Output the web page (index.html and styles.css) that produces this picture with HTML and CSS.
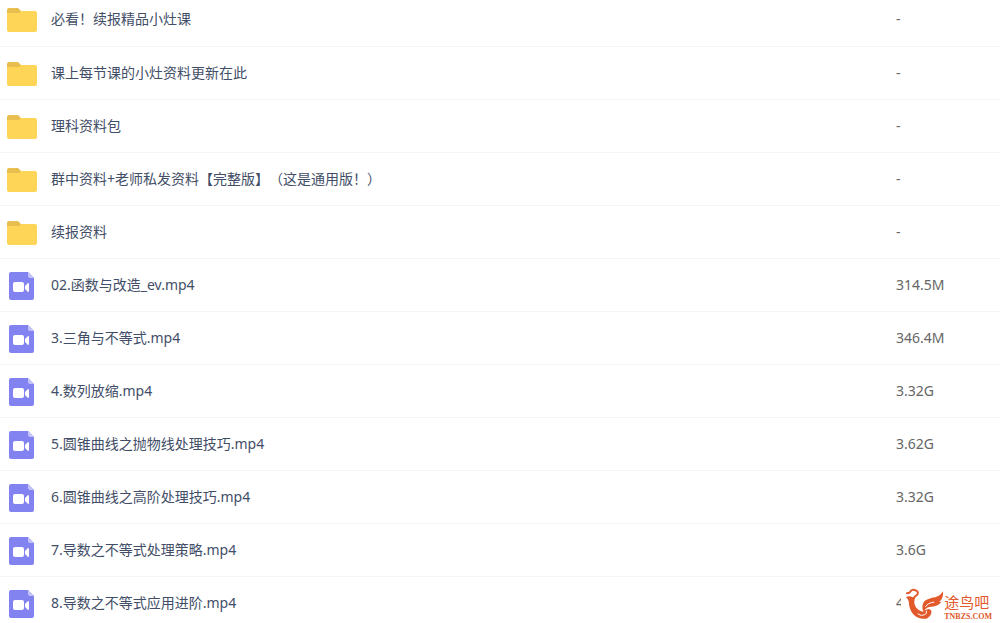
FILE: index.html
```
<!DOCTYPE html>
<html lang="zh-CN">
<head>
  <meta charset="UTF-8" />
  <title>文件列表</title>
  <link rel="stylesheet" href="styles.css">
</head>
<body>
  <!-- Shared icons -->
  <svg class="sprite" aria-hidden="true">
    <symbol id="folder" viewBox="0 0 31 28">
      <path fill="#e8bf4e" d="M3 2h9l3 3v5H1V4q0-2 2-2z"/>
      <path fill="#ffd558" d="M1 8q0-1 1-1h11l2-2h14q2 0 2 2v17q0 2-2 2H3q-2 0-2-2z"/>
    </symbol>
    <symbol id="video" viewBox="0 0 31 28">
      <path fill="#8282f0" d="M5 0h17l6 6v20q0 2-2 2H5q-2 0-2-2V2q0-2 2-2z"/>
      <path fill="#c3c2fa" d="M22 0l6 6h-4q-2 0-2-2z"/>
      <rect fill="#fff" x="7" y="10" width="11" height="10" rx="2"/>
      <path fill="#fff" d="M19 14l3-3q1 0 1 1v7q0 1-1 1l-3-3z"/>
    </symbol>
  </svg>

  <main>
    <table class="files">
      <tbody>
        <tr>
          <td><a href="#" class="name"><svg class="icon"><use href="#folder"/></svg>必看！续报精品小灶课</a></td>
          <td class="size">-</td>
        </tr>
        <tr>
          <td><a href="#" class="name"><svg class="icon"><use href="#folder"/></svg>课上每节课的小灶资料更新在此</a></td>
          <td class="size">-</td>
        </tr>
        <tr>
          <td><a href="#" class="name"><svg class="icon"><use href="#folder"/></svg>理科资料包</a></td>
          <td class="size">-</td>
        </tr>
        <tr>
          <td><a href="#" class="name"><svg class="icon"><use href="#folder"/></svg>群中资料+老师私发资料【完整版】（这是通用版！）</a></td>
          <td class="size">-</td>
        </tr>
        <tr>
          <td><a href="#" class="name"><svg class="icon"><use href="#folder"/></svg>续报资料</a></td>
          <td class="size">-</td>
        </tr>
        <tr>
          <td><a href="#" class="name"><svg class="icon"><use href="#video"/></svg>02.函数与改造_ev.mp4</a></td>
          <td class="size">314.5M</td>
        </tr>
        <tr>
          <td><a href="#" class="name"><svg class="icon"><use href="#video"/></svg>3.三角与不等式.mp4</a></td>
          <td class="size">346.4M</td>
        </tr>
        <tr>
          <td><a href="#" class="name"><svg class="icon"><use href="#video"/></svg>4.数列放缩.mp4</a></td>
          <td class="size">3.32G</td>
        </tr>
        <tr>
          <td><a href="#" class="name"><svg class="icon"><use href="#video"/></svg>5.圆锥曲线之抛物线处理技巧.mp4</a></td>
          <td class="size">3.62G</td>
        </tr>
        <tr>
          <td><a href="#" class="name"><svg class="icon"><use href="#video"/></svg>6.圆锥曲线之高阶处理技巧.mp4</a></td>
          <td class="size">3.32G</td>
        </tr>
        <tr>
          <td><a href="#" class="name"><svg class="icon"><use href="#video"/></svg>7.导数之不等式处理策略.mp4</a></td>
          <td class="size">3.6G</td>
        </tr>
        <tr>
          <td><a href="#" class="name"><svg class="icon"><use href="#video"/></svg>8.导数之不等式应用进阶.mp4</a></td>
          <td class="size">4</td>
        </tr>
      </tbody>
    </table>
  </main>

  <div class="watermark">
    <svg class="bird" viewBox="0 0 40 34" aria-hidden="true">
      <path fill="none" stroke="#e2592c" stroke-linecap="round" stroke-width="2" d="M2 6Q4 6 5 5Q7 1 11 3Q15 5 12 8Q10 9 9 11"/>
      <path fill="#e2592c" d="M1 10Q4 8 8 10L11 9Q8 15 11 20Q14 24 19 25Q16 19 20 14Q24 11 31 10Q36 9 39 4Q40 11 35 15Q38 15 38 14Q34 20 25 20Q21 21 20 24Q25 20 27 24Q28 29 22 32Q13 33 8 27Q4 22 4 15Q4 12 1 10z"/>
      <path fill="none" stroke="#fff" stroke-width="1" d="M13 27Q17 30 20 28Q23 27 22 24M21 20Q23 16 30 15"/>
    </svg>
    <div class="brand">
      <span class="brand-name">途鸟吧</span>
      <span class="brand-url">TNBZS.COM</span>
    </div>
  </div>
</body>
</html>
```

FILE: styles.css
```
/* Layout & Reset */
* {
  box-sizing: border-box;
  margin: 0;
  padding: 0;
}
body {
  position: relative;
  height: 100vh;
  overflow: hidden;
  font-family: "Noto Sans", "Noto Sans CJK SC", sans-serif;
  font-size: 14px;
  line-height: 20px;
  background: #fff;
  color: #424e67;
}
.sprite {
  display: none;
}

/* File list, scrolled slightly past its top */
.files {
  width: 100%;
  margin-top: -7px;
  table-layout: fixed;
  border-collapse: collapse;
}
.files td {
  height: 53px;
  border-bottom: 1px solid #f3f5f9;
  vertical-align: middle;
}
.name {
  display: flex;
  align-items: center;
  gap: 14px;
  padding-left: 6px;
  color: inherit;
  text-decoration: none;
  text-spacing-trim: space-all;
}
.name:hover {
  color: #8282f0;
}
.icon {
  flex: none;
  width: 31px;
  height: 28px;
  margin-top: 2px;
}
.files .size {
  width: 104px;
  color: #666;
}

/* Watermark */
.watermark {
  position: absolute;
  right: 8px;
  bottom: 2px;
  display: flex;
  align-items: center;
  padding-left: 4px;
  background: #fff;
  color: #e2592c;
}
.bird {
  width: 39px;
  height: 34px;
}
.brand {
  display: flex;
  flex-direction: column;
  gap: 4px;
  padding-top: 8px;
}
.brand-name {
  font-family: "Noto Sans CJK SC", sans-serif;
  font-size: 15px;
  line-height: 14px;
}
.brand-url {
  font-family: "Liberation Serif", serif;
  font-size: 8px;
  font-weight: bold;
  line-height: 8px;
}
```
